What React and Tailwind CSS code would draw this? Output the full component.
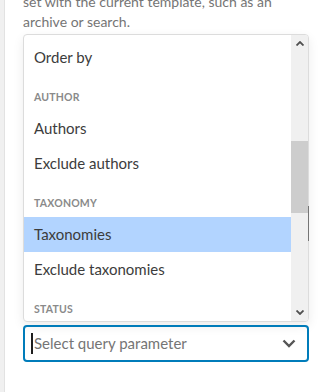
import React from 'react';

const font = { fontFamily: 'Lato, "Liberation Sans", sans-serif' };

const Option = ({ label, active }) => (
    <div className={`h-[35px] flex items-center pl-[10px] text-[15px] text-[#3c3c3c] ${active ? 'bg-[#b2d4ff]' : ''}`}>
        {label}
    </div>
);

const GroupHeading = ({ label }) => (
    <div className="mt-[16px] mb-[6px] h-[14px] flex items-center pl-[10px] text-[10.5px] font-bold tracking-[0.2px] uppercase text-[#8a8a8a]">
        {label}
    </div>
);

const App = () => {
    return (
        <div className="flex h-[392px] bg-white overflow-hidden" style={font}>
            {/* edge of the sidebar */}
            <div className="w-[5px] bg-[#f0f0f0] border-r border-[#e2e2e2]" />

            <div className="relative pl-[18px] w-[304px] flex flex-col">
                <p className="mt-[-8px] text-[14px] leading-[20px] text-[#757575]">
                    set with the current template, such as an
                    <br />
                    archive or search.
                </p>

                {/* open menu */}
                <div className="mt-[2px] h-[288px] flex border border-[#dcdcdc] rounded-[4px] shadow-[0_4px_11px_rgba(0,0,0,0.08)] overflow-hidden bg-white">
                    <div className="flex-1 pt-[5px] overflow-hidden">
                        <Option label="Order by" />
                        <GroupHeading label="Author" />
                        <Option label="Authors" />
                        <Option label="Exclude authors" />
                        <GroupHeading label="Taxonomy" />
                        <Option label="Taxonomies" active />
                        <Option label="Exclude taxonomies" />
                        <GroupHeading label="Status" />
                    </div>

                    {/* scrollbar */}
                    <div className="w-[17px] bg-[#f0f0f0] flex flex-col">
                        <div className="h-[17px] flex items-center justify-center">
                            <svg width="8" height="5" viewBox="0 0 8 5">
                                <path d="M0.5 4.5 L4 1 L7.5 4.5" fill="none" stroke="#505050" strokeWidth="1.8" />
                            </svg>
                        </div>
                        <div className="h-[89px]" />
                        <div className="h-[72px] bg-[#cdcdcd]" />
                        <div className="flex-1" />
                        <div className="h-[17px] flex items-center justify-center">
                            <svg width="8" height="5" viewBox="0 0 8 5">
                                <path d="M0.5 0.5 L4 4 L7.5 0.5" fill="none" stroke="#505050" strokeWidth="1.8" />
                            </svg>
                        </div>
                    </div>
                </div>

                {/* edge of a field behind the menu */}
                <div className="absolute left-[303px] top-[206px] w-[1px] h-[35px] bg-[#757575]" />

                {/* select control */}
                <div className="mt-[3px] h-[37px] flex items-center border-2 border-[#007cba] rounded-[4px] pl-[6px] pr-[11px]">
                    <span className="w-[2px] h-[21px] bg-[#1e1e1e]" />
                    <span className="ml-[1px] flex-1 text-[15px] text-[#757575]">Select query parameter</span>
                    <svg width="14" height="9" viewBox="0 0 14 9">
                        <path d="M1.5 1.5 L7 7 L12.5 1.5" fill="none" stroke="#555" strokeWidth="2.4" />
                    </svg>
                </div>
            </div>
        </div>
    );
};

export default App;
